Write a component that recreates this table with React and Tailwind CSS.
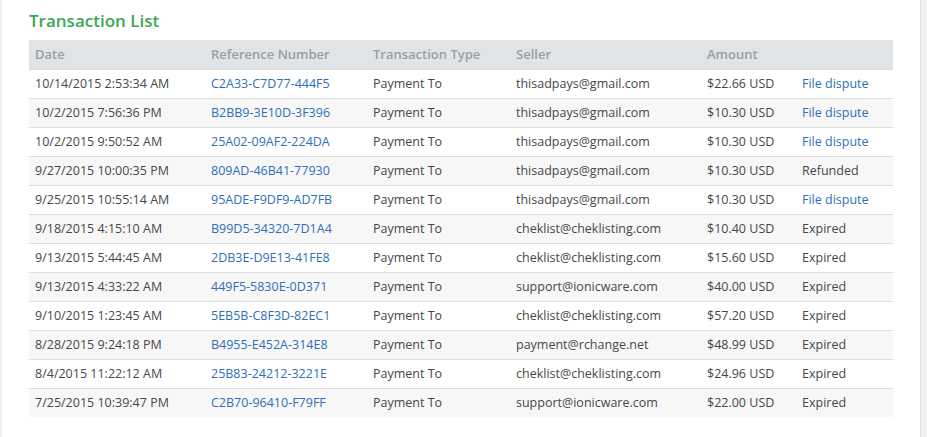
import React from "react";

const rows = [
  ["10/14/2015 2:53:34 AM", "C2A33-C7D77-444F5", "thisadpays@gmail.com", "$22.66 USD", "File dispute"],
  ["10/2/2015 7:56:36 PM", "B2BB9-3E10D-3F396", "thisadpays@gmail.com", "$10.30 USD", "File dispute"],
  ["10/2/2015 9:50:52 AM", "25A02-09AF2-224DA", "thisadpays@gmail.com", "$10.30 USD", "File dispute"],
  ["9/27/2015 10:00:35 PM", "809AD-46B41-77930", "thisadpays@gmail.com", "$10.30 USD", "Refunded"],
  ["9/25/2015 10:55:14 AM", "95ADE-F9DF9-AD7FB", "thisadpays@gmail.com", "$10.30 USD", "File dispute"],
  ["9/18/2015 4:15:10 AM", "B99D5-34320-7D1A4", "cheklist@cheklisting.com", "$10.40 USD", "Expired"],
  ["9/13/2015 5:44:45 AM", "2DB3E-D9E13-41FE8", "cheklist@cheklisting.com", "$15.60 USD", "Expired"],
  ["9/13/2015 4:33:22 AM", "449F5-5830E-0D371", "support@ionicware.com", "$40.00 USD", "Expired"],
  ["9/10/2015 1:23:45 AM", "5EB5B-C8F3D-82EC1", "cheklist@cheklisting.com", "$57.20 USD", "Expired"],
  ["8/28/2015 9:24:18 PM", "B4955-E452A-314E8", "payment@rchange.net", "$48.99 USD", "Expired"],
  ["8/4/2015 11:22:12 AM", "25B83-24212-3221E", "cheklist@cheklisting.com", "$24.96 USD", "Expired"],
  ["7/25/2015 10:39:47 PM", "C2B70-96410-F79FF", "support@ionicware.com", "$22.00 USD", "Expired"],
];

const cell = "h-[29px] px-[6px] align-middle";
const td = `${cell} pt-[2px] border-t border-[#dddddd]`;

export default function App() {
  return (
    <div className="flex h-[437px] w-[927px] bg-[#eef0f3] font-['Open_Sans',sans-serif] text-[13px]">
      <div className="ml-[2px] w-[919px] border-r border-[#e1e4e7] bg-white pl-[27px]">
        <h2 className="mt-[9px] h-[31px] text-[17px] font-semibold leading-[24px] text-[#3ca752]">
          Transaction List
        </h2>
        <table className="w-[864px] table-fixed border-collapse text-left">
          <colgroup>
            <col className="w-[176px]" />
            <col className="w-[162px]" />
            <col className="w-[143px]" />
            <col className="w-[191px]" />
            <col className="w-[95px]" />
            <col className="w-[97px]" />
          </colgroup>
          <thead>
            <tr className="bg-[#e1e4e7] text-[#9a9ea2]">
              <th className={`${cell} font-semibold`}>Date</th>
              <th className={`${cell} font-semibold`}>Reference Number</th>
              <th className={`${cell} font-semibold`}>Transaction Type</th>
              <th className={`${cell} font-semibold`}>Seller</th>
              <th className={`${cell} font-semibold`}>Amount</th>
              <th className={cell}></th>
            </tr>
          </thead>
          <tbody className="text-[12.5px] text-[#474747]">
            {rows.map((r, i) => (
              <tr key={r[1]} className={i % 2 === 1 ? "bg-[#f7f7f7]" : "bg-white"}>
                <td className={td}>{r[0]}</td>
                <td className={`${td} text-[#2f6fb7]`}>{r[1]}</td>
                <td className={td}>Payment To</td>
                <td className={td}>{r[2]}</td>
                <td className={td}>{r[3]}</td>
                <td className={`${td} ${r[4] === "File dispute" ? "text-[#2f6fb7]" : ""}`}>
                  {r[4]}
                </td>
              </tr>
            ))}
          </tbody>
        </table>
      </div>
    </div>
  );
}
